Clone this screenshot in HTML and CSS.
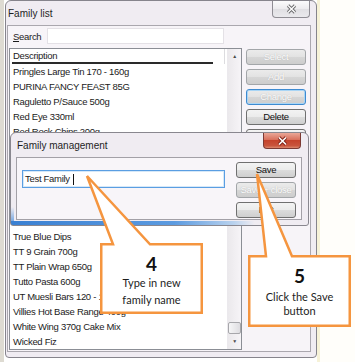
FILE: index.html
```html
<!DOCTYPE html>
<html lang="en">
<head>
    <meta charset="UTF-8">
    <title>Family list</title>
    <link rel="stylesheet" href="styles.css">
</head>
<body>
    <div class="desk">
        <div class="window">
            <div class="titlebar">
                <span class="title">Family list</span>
                <div class="close-btn">
                    <svg width="11" height="10" viewBox="0 0 11 10">
                        <path d="M2 1.5 L9 8.5 M9 1.5 L2 8.5" stroke="#6d6d70" stroke-width="3.2"/>
                        <path d="M2 1.5 L9 8.5 M9 1.5 L2 8.5" stroke="#fff" stroke-width="1.3"/>
                    </svg>
                </div>
            </div>
            <div class="client">
                <div class="search-row">
                    <label for="search"><u>S</u>earch</label>
                    <div class="search-input" id="search"></div>
                </div>
                <div class="main">
                    <div class="list">
                        <div class="list-body">
                            <div class="list-header">
                                <div class="col">Description</div>
                            </div>
                            <div class="row">Pringles Large Tin 170 - 160g</div>
                            <div class="row">PURINA FANCY FEAST 85G</div>
                            <div class="row">Raguletto P/Sauce 500g</div>
                            <div class="row">Red Eye 330ml</div>
                            <div class="row">Red Rock Chips 200g</div>
                            <!-- rows hidden behind the dialog -->
                            <div class="row"></div>
                            <div class="row"></div>
                            <div class="row"></div>
                            <div class="row"></div>
                            <div class="row"></div>
                            <div class="row"></div>
                            <div class="row">True Blue Dips</div>
                            <div class="row">TT 9 Grain 700g</div>
                            <div class="row">TT Plain Wrap 650g</div>
                            <div class="row">Tutto Pasta 600g</div>
                            <div class="row">UT Muesli Bars 120 - 180g</div>
                            <div class="row">Villies Hot Base Range 400g</div>
                            <div class="row">White Wing 370g Cake Mix</div>
                            <div class="row">Wicked Fiz</div>
                        </div>
                        <div class="scrollbar">
                            <div class="arrow">&#9650;</div>
                            <div class="track"><div class="thumb"></div></div>
                            <div class="arrow">&#9660;</div>
                        </div>
                    </div>
                    <div class="buttons">
                        <div class="btn disabled">Select</div>
                        <div class="btn disabled">Add</div>
                        <div class="btn disabled focused">Change</div>
                        <div class="btn">Delete</div>
                        <div class="btn">Close</div>
                    </div>
                </div>
            </div>
        </div>

        <!-- modal dialog on top of the list window -->
        <div class="dialog">
            <div class="titlebar dlg-titlebar">
                <span class="title">Family management</span>
                <div class="close-btn red">
                    <svg width="11" height="10" viewBox="0 0 11 10">
                        <path d="M2 1.5 L9 8.5 M9 1.5 L2 8.5" stroke="#7e2216" stroke-width="3.4"/>
                        <path d="M2 1.5 L9 8.5 M9 1.5 L2 8.5" stroke="#fff" stroke-width="1.6"/>
                    </svg>
                </div>
            </div>
            <div class="dlg-client">
                <div class="name-input">Test Family<span class="caret"></span></div>
                <div class="buttons dlg-buttons">
                    <div class="btn">Save</div>
                    <div class="btn disabled">Save + close</div>
                    <div class="btn">Exit</div>
                </div>
            </div>
        </div>

        <!-- annotation callouts -->
        <div class="callout step4">
            <svg class="bubble" width="103" height="71">
                <path d="M1.25 1.25 H13 L-13 -67 L50 1.25 H101.75 V69.75 H1.25 Z"/>
            </svg>
            <div class="num">4</div>
            <div class="line">Type in new</div>
            <div class="line">family name</div>
        </div>
        <div class="callout step5">
            <svg class="bubble" width="103" height="72">
                <path d="M1.25 1.25 H18 L9 -81 L44 1.25 H101.75 V70.75 H1.25 Z"/>
            </svg>
            <div class="num">5</div>
            <div class="line">Click the Save</div>
            <div class="line">button</div>
        </div>
    </div>
</body>
</html>
```

FILE: styles.css
```css
* {
    box-sizing: border-box;
}
body {
    margin: 0;
    background: #fff;
    font-family: "Liberation Sans", Arial, sans-serif;
    font-size: 9.5px;
    letter-spacing: -0.3px;
    color: #1b1b1b;
}
.desk {
    position: relative;
    width: 355px;
    height: 362px;
    padding-left: 5px;
    overflow: hidden;
    background: linear-gradient(90deg, #dedbd2 0 4px, #fff 4px 317px, #f6f2d8 317px 320px, #fffefa 320px);
}
.window {
    width: 312px;
    height: 358px;
    border: 1px solid #86848c;
    border-radius: 6px 6px 4px 4px;
    background: #f0ecf2;
    display: flex;
    flex-direction: column;
}
.titlebar {
    height: 24px;
    flex-shrink: 0;
    display: flex;
    justify-content: space-between;
    align-items: flex-start;
    padding: 0 6px 0 2px;
}
.title {
    align-self: center;
    font-size: 10px;
    letter-spacing: 0;
    color: #1e1e1e;
}
.close-btn {
    width: 38px;
    height: 17px;
    border: 1px solid #8f8d94;
    border-top: none;
    border-radius: 0 0 4px 4px;
    background: linear-gradient(#fbfbfc, #ecebee 50%, #e0dfe3 51%, #eae9ed);
    display: flex;
    justify-content: center;
    align-items: center;
}
.close-btn.red {
    height: 16px;
    border-color: #7c3a33;
    background: linear-gradient(#eaa797, #d8705c 45%, #c5432c 50%, #c9553d 85%, #dd8a6f);
}
.client {
    flex: 1;
    margin: 0 5px 5px 1px;
    border: 1px solid #aaa7ae;
    background: #f7f4f8;
    display: flex;
    flex-direction: column;
}
.search-row {
    display: flex;
    align-items: center;
    height: 16px;
    margin-top: 2px;
    padding-left: 5px;
}
.search-row label {
    width: 34px;
}
.search-input {
    width: 177px;
    height: 16px;
    border: 1px solid #e4e1e6;
    background: #fff;
}
.main {
    display: flex;
    margin-top: 4px;
}
.list {
    width: 233px;
    height: 302px;
    margin-left: 1px;
    border: 1px solid #8b8e95;
    background: #fff;
    display: flex;
}
.list-body {
    flex: 1;
    overflow: hidden;
}
.list-header {
    height: 15px;
    display: flex;
}
.col {
    width: 215px;
    padding-left: 3px;
    line-height: 14px;
    border-right: 1px solid #dcdcdf;
    background: linear-gradient(#2a2a2a, #2a2a2a) 2px 100% / 201px 2px no-repeat;
}
.row {
    height: 15px;
    line-height: 15px;
    padding-left: 3px;
    white-space: nowrap;
}
.scrollbar {
    width: 14px;
    display: flex;
    flex-direction: column;
    border-left: 1px solid #ebe9ed;
    background: linear-gradient(90deg, #ebe9ec, #f6f4f7);
}
.arrow {
    height: 15px;
    font-size: 5px;
    line-height: 15px;
    text-align: center;
    color: #4a4a4a;
}
.track {
    flex: 1;
    display: flex;
    flex-direction: column;
    justify-content: flex-end;
    align-items: center;
}
.thumb {
    width: 13px;
    height: 12px;
    border: 1px solid #a7a7ab;
    border-radius: 2px;
    background: linear-gradient(90deg, #f6f6f7, #dedde1);
}
.buttons {
    width: 60px;
    margin: 1px 0 0 4px;
    display: flex;
    flex-direction: column;
    gap: 4px;
}
.btn {
    height: 16px;
    border: 1px solid #707070;
    border-radius: 3px;
    background: linear-gradient(#f3f3f3, #ebebeb 50%, #dcdcdc 51%, #cfcfcf);
    text-align: center;
    line-height: 14px;
    color: #111;
}
.btn.disabled {
    border-color: #a3a6a9;
    background: linear-gradient(#ebebeb, #e2e2e2 50%, #d6d6d6 51%, #cdcdcd);
    color: #fdfdfd;
    text-shadow: 0 0 1px #a9a9a9;
}
.btn.focused {
    border-color: #3d8ad0;
    box-shadow: inset 0 0 0 1px #a9d5f5;
}
.dialog {
    position: absolute;
    left: 10px;
    top: 132px;
    width: 299px;
    height: 94px;
    border: 1px solid #89878f;
    border-radius: 6px 6px 3px 3px;
    display: flex;
    flex-direction: column;
    background:
        linear-gradient(90deg, #3a80d2, #5c9be0 55%, #b9d2ee 75%, #f0ecf2 82%) left bottom / 100% 4px no-repeat,
        linear-gradient(#f0ecf2 40%, #5b97dc) left bottom / 3px 30px no-repeat,
        #f0ecf2;
}
.dlg-titlebar {
    padding: 0 7px 0 6px;
}
.dlg-client {
    height: 63px;
    margin: 0 6px 0 5px;
    border: 1px solid #a3a0a7;
    background: #f8f5f9;
    display: flex;
    align-items: flex-start;
}
.name-input {
    width: 203px;
    height: 18px;
    margin: 12px 0 0 5px;
    padding-left: 2px;
    border: 1px solid #5a9ee2;
    box-shadow: inset 0 0 0 1px #d6e8f8;
    background: #fff;
    line-height: 16px;
    display: flex;
    align-items: center;
}
.caret {
    width: 1px;
    height: 11px;
    margin-left: 3px;
    background: #111;
}
.dlg-buttons {
    margin: 4px 0 0 11px;
}
.callout {
    position: absolute;
    display: flex;
    flex-direction: column;
    align-items: center;
    padding-top: 10px;
    font-family: Lato, "Open Sans", sans-serif;
    letter-spacing: 0;
    color: #1d1d1d;
}
.bubble {
    position: absolute;
    left: 0;
    top: 0;
    overflow: visible;
}
.bubble path {
    fill: #fff;
    stroke: #f5953f;
    stroke-width: 2.5;
}
.num, .line {
    position: relative;
}
.num {
    font-size: 19px;
    font-weight: bold;
    line-height: 21px;
    color: #111;
}
.line {
    font-size: 11px;
}
.step4 {
    left: 100px;
    top: 243px;
    width: 103px;
    height: 71px;
}
.step4 .line {
    line-height: 17px;
}
.step5 {
    left: 248px;
    top: 255px;
    width: 103px;
    height: 72px;
}
.step5 .line {
    line-height: 14px;
}
.step5 .num {
    margin-bottom: 4px;
}
```
